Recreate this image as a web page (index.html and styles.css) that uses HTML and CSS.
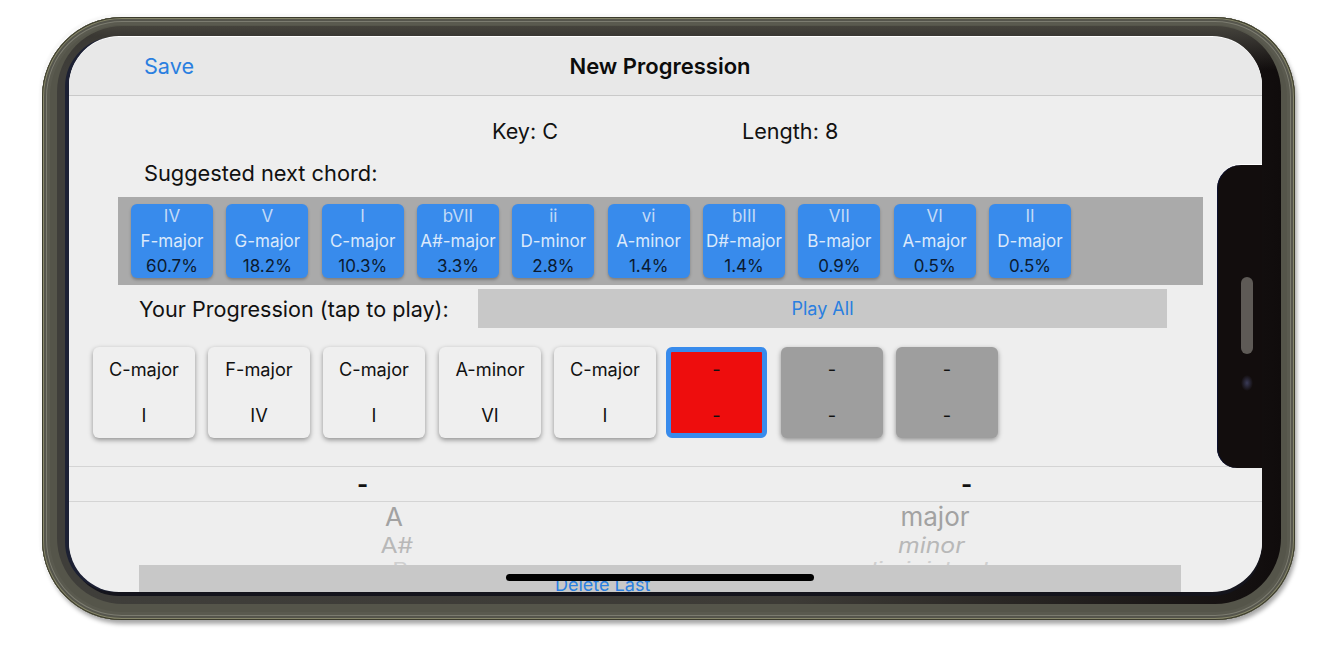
FILE: index.html
```html
<!DOCTYPE html>
<html lang="en">
<head>
<meta charset="utf-8">
<title>New Progression</title>
<link rel="stylesheet" href="styles.css">
</head>
<body>
<div class="phone">
  <div class="screen">
    <header class="nav">
      <span class="nav-save">Save</span>
      <span class="nav-title">New Progression</span>
    </header>
    <div class="meta">
      <span class="meta-key">Key: C</span>
      <span>Length: 8</span>
    </div>
    <div class="suggest-label">Suggested next chord:</div>
    <div class="strip">
      <div class="chip"><span class="chip-top">IV</span><span>F-major</span><span class="chip-pct">60.7%</span></div>
      <div class="chip"><span class="chip-top">V</span><span>G-major</span><span class="chip-pct">18.2%</span></div>
      <div class="chip"><span class="chip-top">I</span><span>C-major</span><span class="chip-pct">10.3%</span></div>
      <div class="chip"><span class="chip-top">bVII</span><span>A#-major</span><span class="chip-pct">3.3%</span></div>
      <div class="chip"><span class="chip-top">ii</span><span>D-minor</span><span class="chip-pct">2.8%</span></div>
      <div class="chip"><span class="chip-top">vi</span><span>A-minor</span><span class="chip-pct">1.4%</span></div>
      <div class="chip"><span class="chip-top">bIII</span><span>D#-major</span><span class="chip-pct">1.4%</span></div>
      <div class="chip"><span class="chip-top">VII</span><span>B-major</span><span class="chip-pct">0.9%</span></div>
      <div class="chip"><span class="chip-top">VI</span><span>A-major</span><span class="chip-pct">0.5%</span></div>
      <div class="chip"><span class="chip-top">II</span><span>D-major</span><span class="chip-pct">0.5%</span></div>
    </div>
    <div class="prog-head">
      <span class="prog-label">Your Progression (tap to play):</span>
      <span class="play-all">Play All</span>
    </div>
    <div class="slots">
      <div class="slot"><span>C-major</span><span>I</span></div>
      <div class="slot"><span>F-major</span><span>IV</span></div>
      <div class="slot"><span>C-major</span><span>I</span></div>
      <div class="slot slot-after"><span>A-minor</span><span>VI</span></div>
      <div class="slot"><span>C-major</span><span>I</span></div>
      <div class="slot slot-active"><span>-</span><span>-</span></div>
      <div class="slot slot-empty slot-after"><span>-</span><span>-</span></div>
      <div class="slot slot-empty"><span>-</span><span>-</span></div>
    </div>
    <div class="selected">
      <span class="selected-a">-</span>
      <span class="selected-b">-</span>
    </div>
    <div class="wheels">
      <div class="wheel wheel-root">
        <span class="w1">A</span>
        <span class="w2 shift-r">A#</span>
        <span class="w3 shift-rr">B</span>
      </div>
      <div class="wheel wheel-kind">
        <span class="w1">major</span>
        <span class="w2 shift-l tilt">minor</span>
        <span class="w3 shift-ll tilt">diminished</span>
      </div>
    </div>
    <div class="delete-bar"><span>Delete Last</span></div>
    <div class="home-bar"></div>
    <div class="notch">
      <div class="speaker"></div>
      <div class="camera"></div>
    </div>
  </div>
</div>
</body>
</html>
```

FILE: styles.css
```css
* { box-sizing: border-box; }

html, body { margin: 0; height: 100%; background: #fff; overflow: hidden; }

body {
  padding: 17px 0 0 42px;
  font-family: Inter, "Liberation Sans", sans-serif;
  color: #111;
}

.phone {
  position: relative;
  width: 1253px;
  height: 603px;
  padding: 20px 33px 28px 27px;
  border-radius: 80px;
  background: #55554a;
  box-shadow:
    inset 0 0 0 1px #3b3b2c,
    inset 0 0 0 2px #86866a,
    inset 0 0 0 4px #55554c,
    inset 0 0 0 5px #7c7c70,
    inset 0 0 0 8px #5a5a4f,
    -3px -3px 2px #f8f8f8,
    2px 4px 4px rgba(0, 0, 0, .35);
}

.phone::before {
  content: "";
  position: absolute;
  inset: 9px 14px 16px 15px;
  border-radius: 66px;
  background:
    linear-gradient(180deg, #45433c 0, #3a3833 10px, rgba(20, 16, 16, 0) 44px),
    linear-gradient(90deg, #3f3e3a 0%, #3d3b36 60%, #141010 97%, #100c0c 100%);
}

.screen {
  position: relative;
  display: flex;
  flex-direction: column;
  width: 1193px;
  height: 555px;
  border-radius: 50px;
  overflow: hidden;
  background: #eee;
  box-shadow: 0 -1px 0 #fff, -4px 0 0 #1c2033, 0 4px 0 #14141c;
}

.nav {
  display: grid;
  grid-template-columns: 1fr auto 1fr;
  align-items: center;
  flex: none;
  height: 59px;
  padding: 0 86px 0 75px;
  background: #e8e8e8;
  border-bottom: 1px solid #c9c9c9;
  font-size: 22px;
}

.nav-save { color: #2a7fe0; font-size: 21.6px; }

.nav-title { font-weight: 600; color: #0c0c0c; }

.meta {
  display: flex;
  flex: none;
  margin-top: 22px;
  padding-left: 423px;
  font-size: 21.6px;
  line-height: 26px;
}

.meta-key { width: 250px; }

.suggest-label {
  flex: none;
  margin-top: 16px;
  padding-left: 75px;
  font-size: 21.8px;
  line-height: 26px;
}

.strip {
  display: flex;
  flex: none;
  gap: 13.33px;
  height: 88px;
  margin: 11px 59px 0 49px;
  padding: 7px 13px;
  background: #aaa;
}

.chip {
  display: flex;
  flex-direction: column;
  align-items: center;
  justify-content: space-between;
  width: 82px;
  height: 74px;
  padding: 2px 0 2px;
  border-radius: 6px;
  background: #388bec;
  box-shadow: 0 2px 3px rgba(0, 0, 0, .25);
  color: #dbe9fb;
  font-size: 17px;
  line-height: 20px;
  white-space: nowrap;
}

.chip-top { color: #c2daf7; }

.chip-pct { color: #0b1a30; }

.prog-head {
  display: flex;
  align-items: center;
  flex: none;
  height: 39px;
  margin-top: 4px;
  padding-left: 70px;
  font-size: 21.6px;
}

.prog-label { width: 339px; white-space: nowrap; }

.play-all {
  display: flex;
  align-items: center;
  justify-content: center;
  width: 689px;
  height: 39px;
  background: #c8c8c8;
  color: #2a7fe0;
  font-size: 18px;
}

.slots {
  display: flex;
  flex: none;
  gap: 13px;
  margin-top: 19px;
  padding-left: 24px;
}

.slot {
  display: flex;
  flex-direction: column;
  align-items: center;
  justify-content: space-between;
  width: 102px;
  height: 91px;
  padding: 11px 0 12px;
  border-radius: 6px;
  background: #efefef;
  box-shadow: 0 2px 5px rgba(0, 0, 0, .4);
  font-size: 18.2px;
  line-height: 22px;
}

.slot-after { margin-left: 1px; }

.slot-active {
  width: 101px;
  margin-left: -3px;
  padding: 6px 0 7px;
  border: 5px solid #388bec;
  background: #ee0d0d;
  box-shadow: none;
}

.slot-empty { background: #9e9e9e; }

.selected {
  position: relative;
  flex: none;
  display: flex;
  height: 36px;
  margin-top: 28px;
  border-top: 1px solid #d4d4d4;
  border-bottom: 1px solid #d4d4d4;
  font-size: 24px;
  line-height: 36px;
  font-weight: 700;
}

.selected-a { margin-left: 288px; width: 604px; }

.wheels {
  display: flex;
  flex: none;
  color: #a2a2a2;
}

.wheel {
  display: flex;
  flex-direction: column;
  align-items: center;
  padding-top: 0;
}

.wheel-root { width: 650px; }

.wheel-kind { width: 432px; }

.w1 { font-size: 26px; line-height: 30px; }

.w2 { font-size: 21px; line-height: 27px; color: #b8b8b8; transform: scaleX(1.18); }

.w3 { font-size: 19px; line-height: 22px; color: #cfcfcf; transform: scaleX(1.3); }

.shift-r { margin-left: 6px; }

.shift-rr { margin-left: 12px; }

.shift-l { margin-left: -8px; }

.shift-ll { margin-left: -20px; }

.tilt { font-style: italic; }

.delete-bar {
  position: absolute;
  left: 70px;
  top: 528px;
  width: 1042px;
  height: 27px;
  padding: 10px 0 0 416px;
  overflow: hidden;
  background: #c8c8c8;
  color: #2a7fe0;
  font-size: 18px;
  line-height: 20px;
}

.home-bar {
  position: absolute;
  left: 437px;
  top: 537px;
  width: 308px;
  height: 7px;
  border-radius: 4px;
  background: #000;
}

.notch {
  position: absolute;
  right: 0;
  top: 128px;
  display: flex;
  flex-direction: column;
  align-items: center;
  width: 45px;
  height: 303px;
  padding: 112px 0 0 15px;
  border-radius: 24px 0 0 20px;
  background: #120d0d;
  box-shadow: 0 -1px 0 #fff, inset 1px 0 0 #0b1030;
}

.speaker {
  width: 12px;
  height: 77px;
  border-radius: 6px;
  background: #5e5a56;
}

.camera {
  width: 12px;
  height: 16px;
  margin-top: 21px;
  border-radius: 50%;
  background: radial-gradient(closest-side, #3a3b58, #120d0d);
}
```
